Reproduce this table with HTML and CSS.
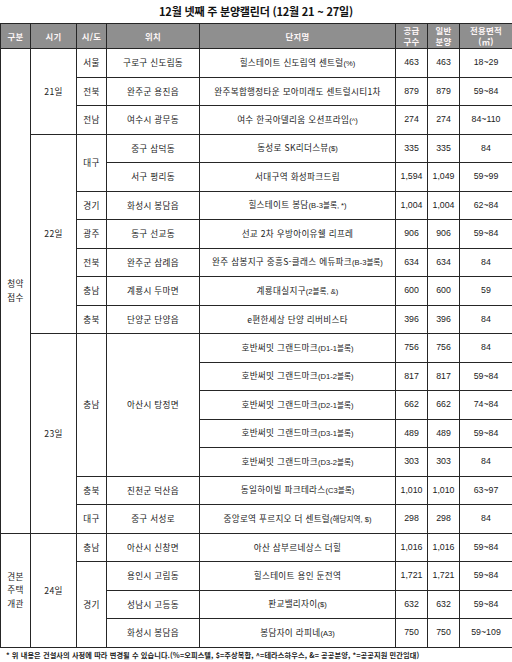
FILE: index.html
```html
<!DOCTYPE html>
<html lang="ko">
<head>
<meta charset="utf-8">
<link rel="stylesheet" href="styles.css">
</head>
<body>
<h1 class="title">12월 넷째 주 분양캘린더 (12월 21 ~ 27일)</h1>
<table class="cal">
<colgroup>
<col class="c1"><col class="c2"><col class="c3"><col class="c4"><col class="c5"><col class="c6"><col class="c7"><col class="c8">
</colgroup>
<thead>
<tr><th>구분</th><th>시기</th><th>시/도</th><th>위치</th><th>단지명</th><th>공급<br>구수</th><th>일반<br>분양</th><th>전용면적<br>(㎡)</th></tr>
</thead>
<tbody>
<tr><td rowspan="17" class="grp">청약<br>접수</td><td rowspan="3">21일</td><td>서울</td><td>구로구 신도림동</td><td>힐스테이트 신도림역 센트럴<span class="sm">(%)</span></td><td class="n">463</td><td class="n">463</td><td class="n">18~29</td></tr>
<tr><td>전북</td><td>완주군 용진읍</td><td>완주복합행정타운 모아미래도 센트럴시티1차</td><td class="n">879</td><td class="n">879</td><td class="n">59~84</td></tr>
<tr><td>전남</td><td>여수시 광무동</td><td>여수 한국아델리움 오션프라임<span class="sm">(^)</span></td><td class="n">274</td><td class="n">274</td><td class="n">84~110</td></tr>
<tr><td rowspan="7">22일</td><td rowspan="2">대구</td><td>중구 삼덕동</td><td>동성로 SK리더스뷰<span class="sm">($)</span></td><td class="n">335</td><td class="n">335</td><td class="n">84</td></tr>
<tr><td>서구 평리동</td><td>서대구역 화성파크드림</td><td class="n">1,594</td><td class="n">1,049</td><td class="n">59~99</td></tr>
<tr><td>경기</td><td>화성시 봉담읍</td><td>힐스테이트 봉담<span class="sm">(B-3블록, *)</span></td><td class="n">1,004</td><td class="n">1,004</td><td class="n">62~84</td></tr>
<tr><td>광주</td><td>동구 선교동</td><td>선교 2차 우방아이유쉘 리프레</td><td class="n">906</td><td class="n">906</td><td class="n">59~84</td></tr>
<tr><td>전북</td><td>완주군 삼례읍</td><td>완주 삼봉지구 중흥S-클래스 에듀파크<span class="sm">(B-3블록)</span></td><td class="n">634</td><td class="n">634</td><td class="n">84</td></tr>
<tr><td>충남</td><td>계룡시 두마면</td><td>계룡대실지구<span class="sm">(2블록, &amp;)</span></td><td class="n">600</td><td class="n">600</td><td class="n">59</td></tr>
<tr><td>충북</td><td>단양군 단양읍</td><td>e편한세상 단양 리버비스타</td><td class="n">396</td><td class="n">396</td><td class="n">84</td></tr>
<tr><td rowspan="7">23일</td><td rowspan="5">충남</td><td rowspan="5">아산시 탕정면</td><td>호반써밋 그랜드마크<span class="sm">(D1-1블록)</span></td><td class="n">756</td><td class="n">756</td><td class="n">84</td></tr>
<tr><td>호반써밋 그랜드마크<span class="sm">(D1-2블록)</span></td><td class="n">817</td><td class="n">817</td><td class="n">59~84</td></tr>
<tr><td>호반써밋 그랜드마크<span class="sm">(D2-1블록)</span></td><td class="n">662</td><td class="n">662</td><td class="n">74~84</td></tr>
<tr><td>호반써밋 그랜드마크<span class="sm">(D3-1블록)</span></td><td class="n">489</td><td class="n">489</td><td class="n">59~84</td></tr>
<tr><td>호반써밋 그랜드마크<span class="sm">(D3-2블록)</span></td><td class="n">303</td><td class="n">303</td><td class="n">84</td></tr>
<tr><td>충북</td><td>진천군 덕산읍</td><td>동일하이빌 파크테라스<span class="sm">(C3블록)</span></td><td class="n">1,010</td><td class="n">1,010</td><td class="n">63~97</td></tr>
<tr><td>대구</td><td>중구 서성로</td><td>중앙로역 푸르지오 더 센트럴<span class="sm">(해당지역, $)</span></td><td class="n">298</td><td class="n">298</td><td class="n">84</td></tr>
<tr><td rowspan="4" class="grp">견본<br>주택<br>개관</td><td rowspan="4">24일</td><td>충남</td><td>아산시 신창면</td><td>아산 삼부르네상스 더힐</td><td class="n">1,016</td><td class="n">1,016</td><td class="n">59~84</td></tr>
<tr><td rowspan="3">경기</td><td>용인시 고림동</td><td>힐스테이트 용인 둔전역</td><td class="n">1,721</td><td class="n">1,721</td><td class="n">59~84</td></tr>
<tr><td>성남시 고등동</td><td>판교밸리자이<span class="sm">($)</span></td><td class="n">632</td><td class="n">632</td><td class="n">59~84</td></tr>
<tr><td>화성시 봉담읍</td><td>봉담자이 라피네<span class="sm">(A3)</span></td><td class="n">750</td><td class="n">750</td><td class="n">59~109</td></tr>
</tbody>
</table>
<p class="note">* 위 내용은 건설사의 사정에 따라 변경될 수 있습니다.(%=오피스텔, $=주상복합, ^=테라스하우스, &amp;= 공공분양, *=공공지원 민간임대)</p>
</body>
</html>
```
FILE: styles.css
```css
html, body {
  margin: 0;
  padding: 0;
  background: #fff;
}
body {
  font-family: "Noto Sans CJK KR", "Noto Sans", sans-serif;
  color: #222;
  width: 512px;
}
.title {
  margin: 0;
  height: 23px;
  line-height: 22px;
  font-size: 11px;
  font-weight: bold;
  text-align: center;
  color: #111;
  letter-spacing: -0.2px;
}
.cal {
  width: 512px;
  border-collapse: collapse;
  table-layout: fixed;
  font-size: 8.6px;
  letter-spacing: 0.3px;
}
.c1 { width: 30px; }
.c2 { width: 46px; }
.c3 { width: 30px; }
.c4 { width: 93px; }
.c5 { width: 196px; }
.c6 { width: 32px; }
.c7 { width: 32px; }
.c8 { width: 53px; }
.cal th, .cal td {
  border: 1px solid #262626;
  padding: 0;
  text-align: center;
  vertical-align: middle;
  white-space: nowrap;
  overflow: hidden;
}
.cal thead tr {
  height: 25px;
}
.cal th {
  background: #8f8f8f;
  color: #fdf6f6;
  font-weight: bold;
  font-size: 8.4px;
  line-height: 11px;
}
.cal tbody tr {
  height: 28.5px;
}
.cal td {
  line-height: 11px;
}
.cal td.grp {
  line-height: 13.5px;
}
.cal td.n {
  font-family: "Liberation Sans", "Noto Sans", sans-serif;
  font-size: 8.8px;
  letter-spacing: 0;
}
.sm {
  font-family: "Liberation Sans", "Noto Sans CJK KR", sans-serif;
  font-size: 7.6px;
  letter-spacing: 0;
}
.note {
  margin: 2px 0 0 6px;
  font-size: 7.2px;
  font-weight: bold;
  color: #222;
  line-height: 10px;
  letter-spacing: 0.1px;
  white-space: nowrap;
}
```
